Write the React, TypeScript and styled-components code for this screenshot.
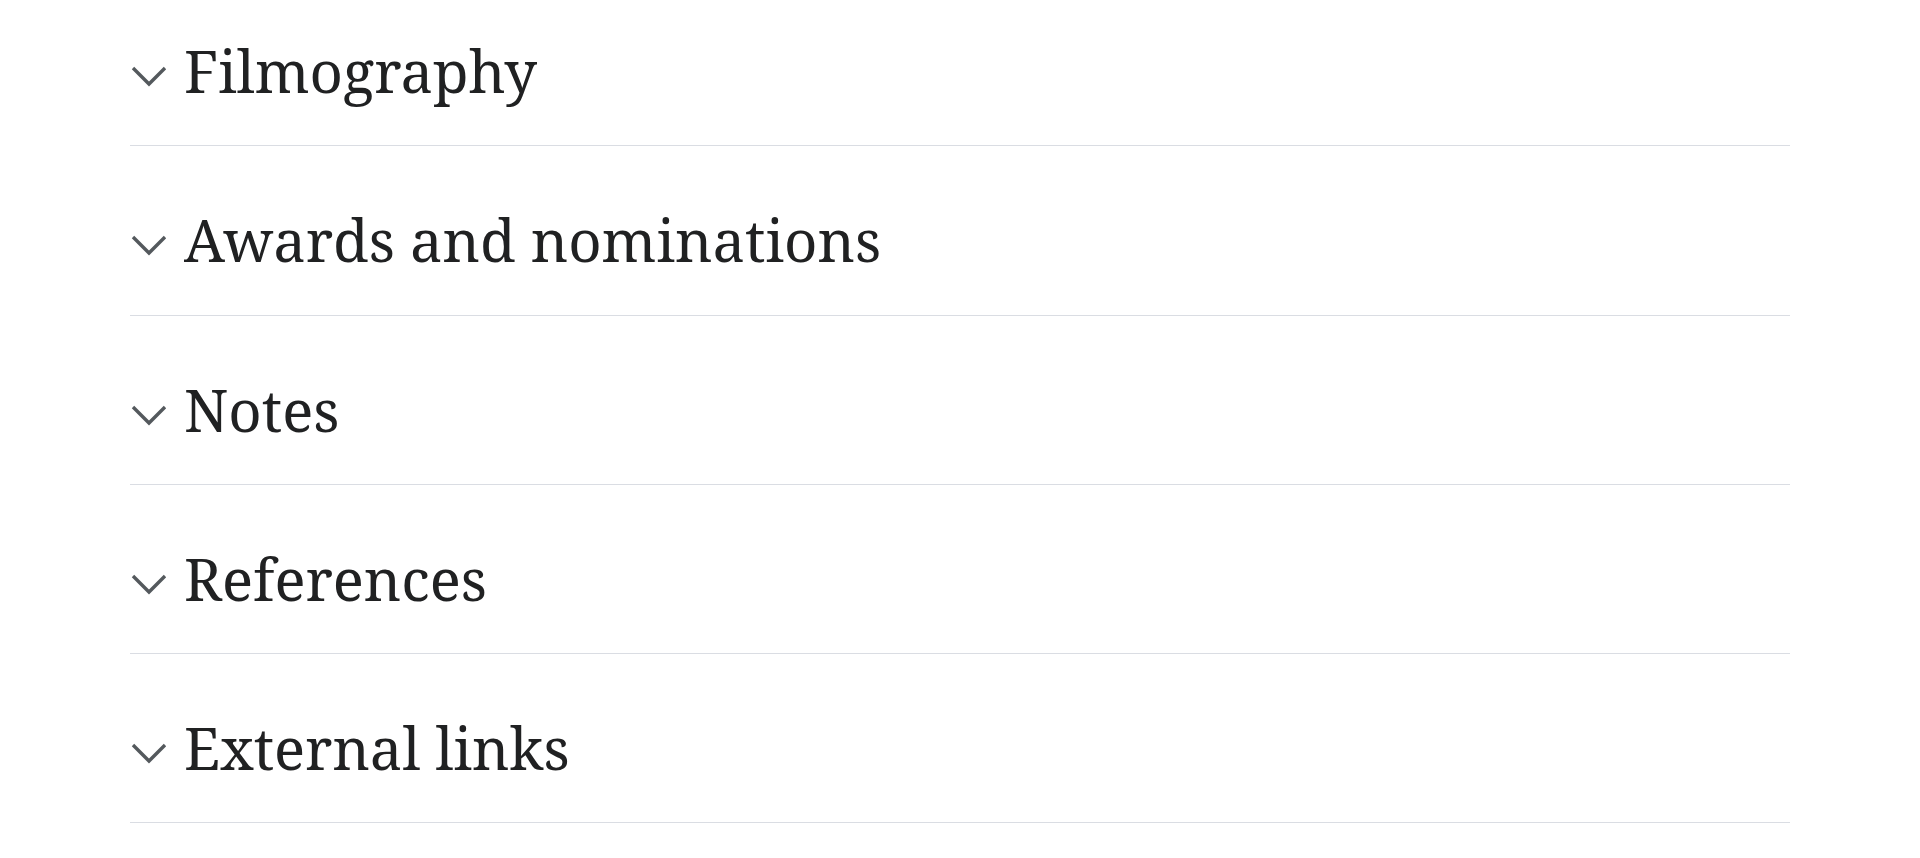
import React from "react";
import styled, { createGlobalStyle } from "styled-components";

const Global = createGlobalStyle`
  html, body { margin: 0; padding: 0; background: #ffffff; }
  body { overflow: hidden; }
`;

const Page = styled.div`
  width: 1920px;
  height: 858px;
  overflow: hidden;
  background: #ffffff;
`;

const List = styled.div`
  margin: -23px 130px 0;
  display: flex;
  flex-direction: column;
`;

const Row = styled.div`
  display: flex;
  align-items: center;
  gap: 17px;
  height: 169.3px;
  box-sizing: border-box;
  padding-top: 58.5px;
  padding-bottom: 38.5px;
  border-bottom: 1px solid #dadde3;
  cursor: pointer;
`;

const Chevron = styled.svg`
  flex: none;
  width: 36px;
  height: 36px;
  margin-left: 1px;
  margin-top: 10px;
`;

const Title = styled.h2`
  margin: 0;
  font-family: "Noto Serif", "DejaVu Serif", "Liberation Serif", serif;
  font-weight: normal;
  font-size: 58px;
  line-height: 72px;
  color: #202122;
`;

const sections = [
  "Filmography",
  "Awards and nominations",
  "Notes",
  "References",
  "External links",
];

export default function App() {
  return (
    <Page>
      <Global />
      <List>
        {sections.map((s) => (
          <Row key={s}>
            <Chevron viewBox="0 0 36 36" aria-hidden="true">
              <path
                d="M2 10 L18 26 L34 10"
                fill="none"
                stroke="#54595d"
                strokeWidth="3.4"
              />
            </Chevron>
            <Title>{s}</Title>
          </Row>
        ))}
      </List>
    </Page>
  );
}
